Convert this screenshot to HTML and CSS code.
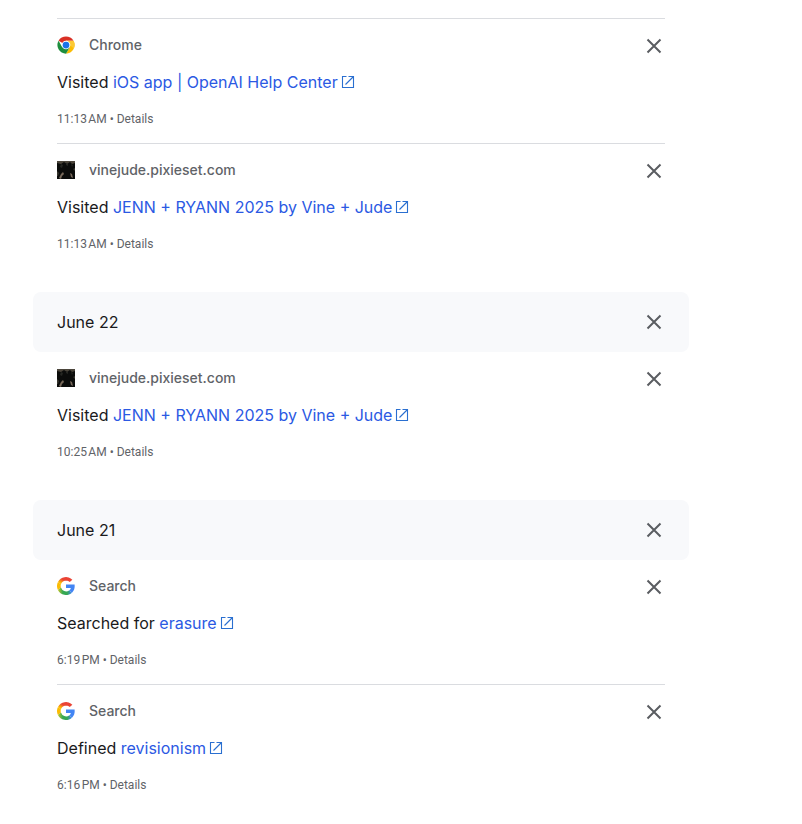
FILE: index.html
```
<!DOCTYPE html>
<html lang="en">
<head>
    <meta charset="UTF-8">
    <meta name="viewport" content="width=device-width, initial-scale=1.0">
    <title>My Activity</title>
    <link rel="stylesheet" href="styles.css">
</head>
<body>
    <!-- Shared icons -->
    <svg class="sprite" aria-hidden="true">
        <symbol id="close" viewBox="0 0 22 22">
            <path d="M4.5 4.5l13 13M17.5 4.5l-13 13" fill="none" stroke="#5a5d61" stroke-width="2"/>
        </symbol>
        <symbol id="open" viewBox="0 0 14 14">
            <path d="M5.5 1.5h-4v11h11V8M7.5 1.5h5V8M12.5 1.5l-8 8" fill="none" stroke="#2a6fd0" stroke-width="1.1"/>
        </symbol>
        <symbol id="chrome" viewBox="0 0 48 48">
            <path d="M24 24L4.1 12.5A23 23 0 0 1 43.9 12.5H24z" fill="#d93025"/>
            <path d="M24 24L43.9 12.5A23 23 0 0 1 24 47L34 29.7z" fill="#fbbc04"/>
            <path d="M24 24L34 29.7 24 47A23 23 0 0 1 4.1 12.5L14 29.7z" fill="#1e8e3e"/>
            <path d="M24 12.5h19.9A23 23 0 0 1 45 33L34 24z" fill="#fcc934"/>
            <circle cx="24" cy="24" r="11.5" fill="#fff"/>
            <circle cx="24" cy="24" r="9" fill="#1a73e8"/>
        </symbol>
        <symbol id="photo" viewBox="0 0 18 18">
            <path d="M0 0h18v18H0z" fill="#0b0c0b"/>
            <path d="M0 0h18v2l-3 1-2-2-3 2-3-2-3 2-4-1z" fill="#4b453b"/>
            <path d="M4 3l2 1-1 3-2-1zM9 2l2 1v2l-2-1zM14 3l2 1-1 2z" fill="#252622"/>
            <path d="M2 17l2-4 2-2 1 2-2 2-1 3zM13 12l2 1 1 4-2-1z" fill="#77685a"/>
            <path d="M0 10l2 2-1 3H0zM16 8l2-1v3z" fill="#39362f"/>
        </symbol>
    </svg>

    <main class="activity">
        <section class="day day-continued">
            <article class="entry">
                <div class="entry-header">
                    <div class="source">
                        <svg class="favicon" aria-hidden="true"><use href="#chrome"/></svg>
                        <span>Chrome</span>
                    </div>
                    <button class="close" type="button" aria-label="Delete activity item"><svg><use href="#close"/></svg></button>
                </div>
                <p class="title">Visited <a href="#">iOS app | OpenAI Help Center<svg class="open" aria-hidden="true"><use href="#open"/></svg></a></p>
                <p class="meta">11:13&#8239;AM • <a href="#">Details</a></p>
            </article>
            <article class="entry">
                <div class="entry-header">
                    <div class="source">
                        <svg class="favicon" aria-hidden="true"><use href="#photo"/></svg>
                        <span>vinejude.pixieset.com</span>
                    </div>
                    <button class="close" type="button" aria-label="Delete activity item"><svg><use href="#close"/></svg></button>
                </div>
                <p class="title">Visited <a href="#">JENN + RYANN 2025 by Vine + Jude<svg class="open" aria-hidden="true"><use href="#open"/></svg></a></p>
                <p class="meta">11:13&#8239;AM • <a href="#">Details</a></p>
            </article>
        </section>

        <section class="day">
            <header class="day-header">
                <h2>June 22</h2>
                <button class="close" type="button" aria-label="Delete all activity from June 22"><svg><use href="#close"/></svg></button>
            </header>
            <article class="entry">
                <div class="entry-header">
                    <div class="source">
                        <svg class="favicon" aria-hidden="true"><use href="#photo"/></svg>
                        <span>vinejude.pixieset.com</span>
                    </div>
                    <button class="close" type="button" aria-label="Delete activity item"><svg><use href="#close"/></svg></button>
                </div>
                <p class="title">Visited <a href="#">JENN + RYANN 2025 by Vine + Jude<svg class="open" aria-hidden="true"><use href="#open"/></svg></a></p>
                <p class="meta">10:25&#8239;AM • <a href="#">Details</a></p>
            </article>
        </section>

        <section class="day">
            <header class="day-header">
                <h2>June 21</h2>
                <button class="close" type="button" aria-label="Delete all activity from June 21"><svg><use href="#close"/></svg></button>
            </header>
            <article class="entry">
                <div class="entry-header">
                    <div class="source">
                        <svg class="favicon" viewBox="0 0 48 48" aria-hidden="true">
                            <defs>
                                <linearGradient id="gTop" x1="0" y1="1" x2="1" y2="0"><stop offset="0.2" stop-color="#fbbc04"/><stop offset="0.5" stop-color="#ea4335"/></linearGradient>
                                <linearGradient id="gBottom" x1="0" y1="0" x2="1" y2="0"><stop offset="0" stop-color="#c6c72b"/><stop offset="0.35" stop-color="#34a853"/><stop offset="0.65" stop-color="#34a853"/><stop offset="1" stop-color="#4285f4"/></linearGradient>
                            </defs>
                            <g id="google">
                                <path d="M41 7A24 24 0 0 0 2.5 13.5L10.5 19.5A14.5 14.5 0 0 1 34 13.5z" fill="url(#gTop)"/>
                                <path d="M2.5 13.5a24 24 0 0 0 0 21l8-6.2a15 15 0 0 1 0-8.8z" fill="#fbbc04"/>
                                <path d="M2.5 34.5A24 24 0 0 0 40 42l-7.7-6A14.5 14.5 0 0 1 10.5 28.3z" fill="url(#gBottom)"/>
                                <path d="M24 20v9h13a11 11 0 0 1-4.7 7L40 42c5.5-5.2 8-13 7-22z" fill="#4285f4"/>
                            </g>
                        </svg>
                        <span>Search</span>
                    </div>
                    <button class="close" type="button" aria-label="Delete activity item"><svg><use href="#close"/></svg></button>
                </div>
                <p class="title">Searched for <a href="#">erasure<svg class="open" aria-hidden="true"><use href="#open"/></svg></a></p>
                <p class="meta">6:19&#8239;PM • <a href="#">Details</a></p>
            </article>
            <article class="entry">
                <div class="entry-header">
                    <div class="source">
                        <svg class="favicon" viewBox="0 0 48 48" aria-hidden="true"><use href="#google"/></svg>
                        <span>Search</span>
                    </div>
                    <button class="close" type="button" aria-label="Delete activity item"><svg><use href="#close"/></svg></button>
                </div>
                <p class="title">Defined <a href="#">revisionism<svg class="open" aria-hidden="true"><use href="#open"/></svg></a></p>
                <p class="meta">6:16&#8239;PM • <a href="#">Details</a></p>
            </article>
        </section>
    </main>
</body>
</html>
```
FILE: styles.css
```
:root {
    --text: #1a1a1c;
    --muted: #5f6368;
    --link: #2b59e3;
    --line: #dadce0;
    --header-bg: #f8f9fb;
}

* {
    margin: 0;
    padding: 0;
    box-sizing: border-box;
}

body {
    font-family: Inter, Roboto, sans-serif;
    background-color: #fff;
    color: var(--text);
}

a {
    color: inherit;
    text-decoration: none;
}

.sprite {
    display: none;
}

.activity {
    padding: 18px 113px 0 33px;
}

.day {
    margin-bottom: 24px;
}

.day-header {
    display: flex;
    align-items: center;
    justify-content: space-between;
    padding: 18px 24px;
    border-radius: 8px;
    background-color: var(--header-bg);
}

.day-header h2 {
    font-size: 16px;
    font-weight: 400;
    line-height: 24px;
}

.entry {
    margin: 0 24px;
    padding: 16px 0;
}

.entry + .entry,
.day-continued .entry {
    border-top: 1px solid var(--line);
}

.entry-header {
    display: flex;
    align-items: flex-start;
    justify-content: space-between;
    height: 22px;
}

.source {
    display: flex;
    align-items: center;
    gap: 14px;
    color: var(--muted);
    font-size: 14px;
    font-weight: 500;
    line-height: 20px;
}

.favicon {
    width: 18px;
    height: 18px;
}

.close {
    display: flex;
    width: 22px;
    height: 22px;
    border: none;
    background: none;
    cursor: pointer;
}

.close svg {
    width: 22px;
    height: 22px;
}

.title {
    margin-top: 13px;
    font-size: 16px;
    font-weight: 400;
    line-height: 24px;
}

.title a {
    color: var(--link);
}

.open {
    width: 14px;
    height: 14px;
    margin-left: 3px;
    vertical-align: -1px;
}

.meta {
    margin-top: 17px;
    color: var(--muted);
    font-family: Roboto, sans-serif;
    font-size: 12px;
    line-height: 16px;
}
```
